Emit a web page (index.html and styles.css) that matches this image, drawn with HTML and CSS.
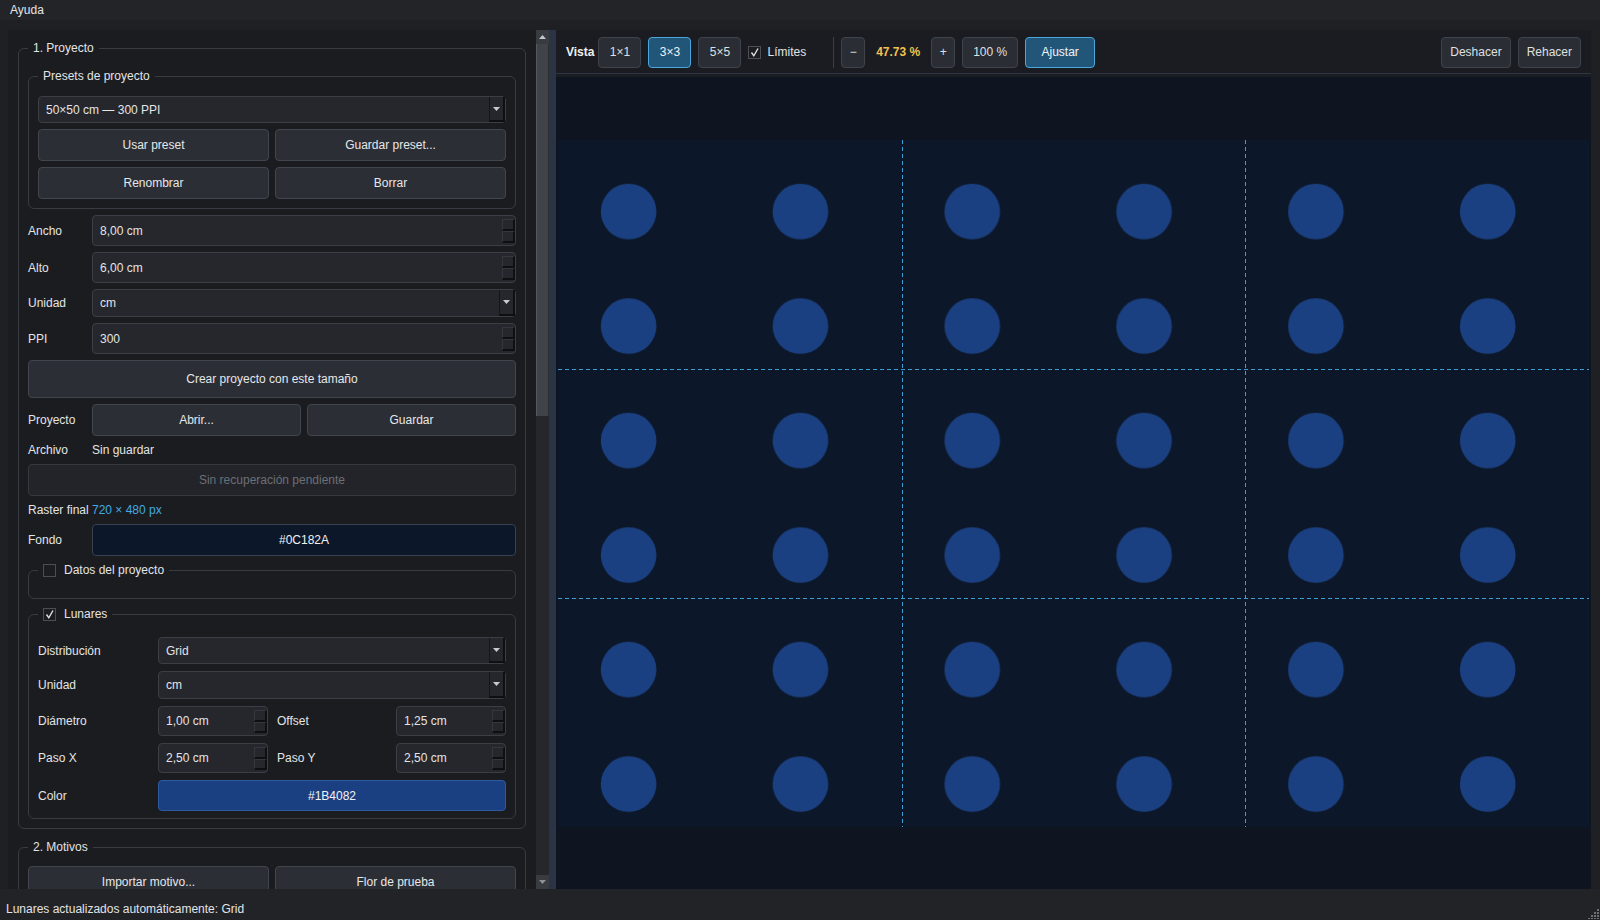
FILE: index.html
```html
<!DOCTYPE html>
<html lang="es">
<head>
<meta charset="UTF-8">
<title>Lunares</title>
<link rel="stylesheet" href="styles.css">
</head>
<body>
<div class="app">

  <!-- MENU -->
  <div class="menubar"><span>Ayuda</span></div>

  <div class="main">

    <!-- LEFT PANEL -->
    <div class="side-scroll">
      <fieldset class="group">
        <legend>1. Proyecto</legend>

        <fieldset class="group">
          <legend>Presets de proyecto</legend>
          <div class="stack">
            <div class="field combo short"><span>50×50 cm — 300 PPI</span><span class="arrow"><svg width="7" height="4"><polygon points="0,0 7,0 3.5,4" fill="#c9cbcf"/></svg></span></div>
            <div class="pair"><button class="btn">Usar preset</button><button class="btn">Guardar preset...</button></div>
            <div class="pair"><button class="btn">Renombrar</button><button class="btn">Borrar</button></div>
          </div>
        </fieldset>

        <div class="row"><label>Ancho</label><div class="field spin"><span>8,00 cm</span><span class="spin-btns"><i></i><i></i></span></div></div>
        <div class="row"><label>Alto</label><div class="field spin"><span>6,00 cm</span><span class="spin-btns"><i></i><i></i></span></div></div>
        <div class="row"><label>Unidad</label><div class="field combo"><span>cm</span><span class="arrow"><svg width="7" height="4"><polygon points="0,0 7,0 3.5,4" fill="#c9cbcf"/></svg></span></div></div>
        <div class="row"><label>PPI</label><div class="field spin"><span>300</span><span class="spin-btns"><i></i><i></i></span></div></div>

        <button class="btn tall">Crear proyecto con este tamaño</button>

        <div class="row"><label>Proyecto</label><div class="pair"><button class="btn">Abrir...</button><button class="btn">Guardar</button></div></div>
        <div class="row text-row"><label>Archivo</label><span>Sin guardar</span></div>

        <button class="btn" disabled>Sin recuperación pendiente</button>

        <div class="row text-row"><label>Raster final</label><span class="accent">720 × 480 px</span></div>
        <div class="row"><label>Fondo</label><button class="btn swatch bg-swatch">#0C182A</button></div>

        <fieldset class="group empty">
          <legend><span class="check"></span>Datos del proyecto</legend>
        </fieldset>

        <fieldset class="group lunares">
          <legend><span class="check"><svg width="11" height="11"><path d="M2.5 5.5 L4.8 8.8 L9 1.5" fill="none" stroke="#e2e2e2" stroke-width="1.4"/></svg></span>Lunares</legend>
          <div class="lunares-grid">
            <label>Distribución</label>
            <div class="field combo short span3"><span>Grid</span><span class="arrow"><svg width="7" height="4"><polygon points="0,0 7,0 3.5,4" fill="#c9cbcf"/></svg></span></div>
            <label>Unidad</label>
            <div class="field combo span3"><span>cm</span><span class="arrow"><svg width="7" height="4"><polygon points="0,0 7,0 3.5,4" fill="#c9cbcf"/></svg></span></div>
            <label>Diámetro</label>
            <div class="field spin mid"><span>1,00 cm</span><span class="spin-btns"><i></i><i></i></span></div>
            <label class="inner">Offset</label>
            <div class="field spin mid"><span>1,25 cm</span><span class="spin-btns"><i></i><i></i></span></div>
            <label>Paso X</label>
            <div class="field spin mid"><span>2,50 cm</span><span class="spin-btns"><i></i><i></i></span></div>
            <label class="inner">Paso Y</label>
            <div class="field spin mid"><span>2,50 cm</span><span class="spin-btns"><i></i><i></i></span></div>
            <label>Color</label>
            <button class="btn swatch dot-swatch span3">#1B4082</button>
          </div>
        </fieldset>
      </fieldset>

      <fieldset class="group motivos">
        <legend>2. Motivos</legend>
        <div class="pair"><button class="btn">Importar motivo...</button><button class="btn">Flor de prueba</button></div>
      </fieldset>
    </div>

    <!-- SCROLLBAR -->
    <div class="scrollbar">
      <div class="sb-arrow"><svg width="7" height="4"><polygon points="0,4 7,4 3.5,0" fill="#c4c7cc"/></svg></div>
      <div class="sb-thumb"></div>
      <div class="sb-track"></div>
      <div class="sb-arrow"><svg width="7" height="4"><polygon points="0,0 7,0 3.5,4" fill="#8d9096"/></svg></div>
    </div>

    <div class="splitter"></div>

    <!-- VIEW -->
    <div class="view">
      <div class="toolbar">
        <b class="tb-title">Vista</b>
        <button class="tb-btn">1×1</button>
        <button class="tb-btn active">3×3</button>
        <button class="tb-btn">5×5</button>
        <span class="tb-check"><span class="check"><svg width="11" height="11"><path d="M2.5 5.5 L4.8 8.8 L9 1.5" fill="none" stroke="#e2e2e2" stroke-width="1.4"/></svg></span>Límites</span>
        <span class="tb-sep"></span>
        <button class="tb-btn small">−</button>
        <span class="zoom">47.73 %</span>
        <button class="tb-btn small">+</button>
        <button class="tb-btn pct">100 %</button>
        <button class="tb-btn fit active">Ajustar</button>
        <span class="spacer"></span>
        <button class="tb-btn">Deshacer</button>
        <button class="tb-btn">Rehacer</button>
      </div>

      <div class="canvas">
        <svg width="1031" height="687" viewBox="0 0 1031 687">
          <defs>
            <pattern id="dots" width="171.83" height="114.5" patternUnits="userSpaceOnUse">
              <circle cx="70.6" cy="71.6" r="27.8" fill="#1b4082"/>
            </pattern>
          </defs>
          <rect width="1031" height="687" fill="#0c182a"/>
          <rect width="1031" height="687" fill="url(#dots)"/>
          <g stroke="#3b9fd1" stroke-width="1" stroke-dasharray="4 3">
            <line x1="344.5" y1="0" x2="344.5" y2="687"/>
            <line x1="687.5" y1="0" x2="687.5" y2="687"/>
            <line x1="0" y1="229.5" x2="1031" y2="229.5"/>
            <line x1="0" y1="458.5" x2="1031" y2="458.5"/>
          </g>
        </svg>
      </div>
    </div>
  </div>

  <!-- STATUS -->
  <div class="statusbar">
    <span>Lunares actualizados automáticamente: Grid</span>
    <svg class="grip" width="12" height="12">
      <g fill="#6d7076">
        <rect x="10" y="2" width="2" height="2"/>
        <rect x="7" y="5" width="2" height="2"/><rect x="10" y="5" width="2" height="2"/>
        <rect x="4" y="8" width="2" height="2"/><rect x="7" y="8" width="2" height="2"/><rect x="10" y="8" width="2" height="2"/>
        <rect x="1" y="11" width="2" height="1"/><rect x="4" y="11" width="2" height="1"/><rect x="7" y="11" width="2" height="1"/><rect x="10" y="11" width="2" height="1"/>
      </g>
    </svg>
  </div>
</div>
</body>
</html>
```

FILE: styles.css
```css
* { box-sizing: border-box; }

body {
  margin: 0;
  background: #1f2023;
  color: #e3e4e6;
  font: 12px "Liberation Sans", Arial, sans-serif;
}

.app { width: 1600px; height: 920px; display: flex; flex-direction: column; overflow: hidden; }

.menubar { height: 20px; line-height: 20px; padding-left: 10px; background: #232428; }

.main { flex: 1; display: flex; min-height: 0; padding: 10px 9px 0 8px; }

/* ---------- left panel ---------- */
.side-scroll {
  width: 528px;
  background: #1b1c1f;
  padding: 10px 10px 0;
  overflow: hidden;
}

.group {
  margin: 0;
  min-width: 0;
  border: 1px solid #383b42;
  border-radius: 6px;
  padding: 12px 9px 9px;
  display: flex;
  flex-direction: column;
  gap: 6px;
}
.group legend {
  padding: 0 5px;
  line-height: 16px;
  display: flex;
  align-items: center;
  gap: 8px;
}
.group .group { padding-bottom: 9px; }
.group.empty { padding: 0 9px 20px; }
.group.lunares { margin-top: 1px; padding: 15px 9px 7px; }
.group.motivos { margin-top: 10px; padding-top: 11px; }

.stack { display: flex; flex-direction: column; gap: 6px; }
.pair { display: grid; grid-template-columns: 1fr 1fr; gap: 6px; }

.row { display: grid; grid-template-columns: 64px 1fr; align-items: center; }
.row label { white-space: nowrap; }
.text-row { height: 16px; }
.accent { color: #43a9e4; }

.field {
  height: 31px;
  display: flex;
  align-items: center;
  padding-left: 7px;
  background: #25272c;
  border: 1px solid #3b3e45;
  border-radius: 4px;
}
.field.combo { height: 28px; }
.field.short { height: 27px; }
.field.mid { height: 30px; }

.spin-btns {
  width: 13px;
  align-self: stretch;
  margin: 3px 0 2px auto;
  display: flex;
  flex-direction: column;
}
.spin-btns i {
  flex: 1;
  border: 1px solid #34373d;
  border-right: 2px solid #0e0f11;
  border-bottom: 2px solid #0e0f11;
}

.arrow {
  width: 16px;
  align-self: stretch;
  margin-left: auto;
  display: flex;
  align-items: center;
  justify-content: center;
  border-left: 1px solid #141518;
  border-right: 2px solid #0e0f11;
  border-bottom: 2px solid #0e0f11;
}

.btn {
  font: inherit;
  color: #e6e7e9;
  height: 32px;
  background: #2b2e35;
  border: 1px solid #41454d;
  border-radius: 4px;
  padding: 0 8px;
}
.btn.tall { height: 38px; }
.btn:disabled { color: #6c6f76; background: #222429; border-color: #35383e; }
.bg-swatch { background: #0c182a; border-color: #3a4252; color: #f2f2f2; }
.dot-swatch { height: 31px; background: #1b4082; border-color: #2e5a9f; color: #f2f2f2; }

.check {
  width: 13px;
  height: 13px;
  border: 1px solid #4a4e56;
  background: #1c1d21;
  display: inline-flex;
  align-items: center;
  justify-content: center;
}

.lunares-grid {
  display: grid;
  grid-template-columns: 120px 1fr 128px 1fr;
  row-gap: 7px;
  align-items: center;
}
.lunares-grid .span3 { grid-column: 2 / -1; }
.lunares-grid .inner { padding-left: 9px; }

/* ---------- scrollbar / splitter ---------- */
.scrollbar { width: 13px; display: flex; flex-direction: column; background: #25272b; }
.sb-arrow { height: 14px; display: flex; align-items: center; justify-content: center; background: #383b40; }
.sb-thumb { height: 372px; background: #404449; border-left: 1px solid #565a60; border-right: 1px solid #2c2e32; }
.sb-track { flex: 1; }
.splitter { width: 7px; background: #2a3444; }

/* ---------- view ---------- */
.view { width: 1035px; display: flex; flex-direction: column; background: #1a1d22; }

.toolbar {
  height: 44px;
  flex-shrink: 0;
  display: flex;
  align-items: center;
  gap: 7px;
  padding: 1px 10px 0;
  background: #1a1c21;
  border-bottom: 1px solid #2f3641;
}
.tb-title { font-weight: bold; color: #f0f0f0; margin-right: -3px; }
.tb-btn {
  font: inherit;
  color: #dfe0e2;
  height: 31px;
  min-width: 43px;
  padding: 0 8px;
  background: #2a2d34;
  border: 1px solid #3f434b;
  border-radius: 4px;
}
.tb-btn.active { background: #225679; border-color: #4aa6dc; color: #eef4f8; }
.tb-btn.small { min-width: 0; width: 24px; padding: 0; }
.tb-btn.pct { width: 56px; }
.tb-btn.fit { width: 70px; }
.tb-check { display: flex; align-items: center; gap: 6px; }
.tb-sep { width: 1px; height: 31px; background: #3a3e46; margin-left: 20px; }
.zoom { font-weight: bold; color: #f2c14e; margin: 0 4px; }
.spacer { flex: 1; }

.canvas {
  flex: 1;
  margin-top: 3px;
  background: #0e1420;
  display: flex;
  align-items: center;
  justify-content: center;
}
.canvas svg { display: block; }

/* ---------- status ---------- */
.statusbar {
  height: 31px;
  position: relative;
  display: flex;
  align-items: flex-end;
  padding: 0 0 3px 6px;
  line-height: 16px;
  background: #222326;
}
.grip { position: absolute; right: 1px; bottom: 1px; }
```
